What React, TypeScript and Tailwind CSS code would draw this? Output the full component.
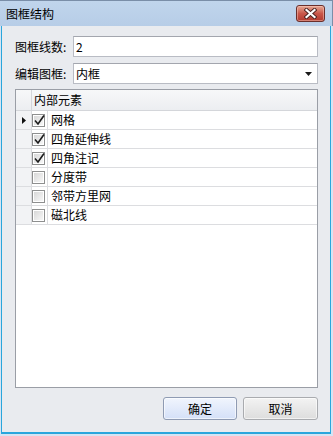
import { ChevronDown } from "lucide-react";

const FONT = { fontFamily: '"Noto Sans CJK SC", "Noto Sans", sans-serif' };

const rows = [
  { name: "网格", checked: true, current: true },
  { name: "四角延伸线", checked: true },
  { name: "四角注记", checked: true },
  { name: "分度带", checked: false },
  { name: "邻带方里网", checked: false },
  { name: "磁北线", checked: false },
];

function CheckBox({ checked }: { checked: boolean }) {
  return (
    <div className="w-[13px] h-[13px] border border-[#8e8f8f] bg-white p-[1px]">
      <div className="relative w-full h-full bg-gradient-to-br from-[#d8d8d8] to-[#f7f7f7]">
        {checked && (
          <svg className="absolute -left-[1px] -top-[2px]" width="13" height="13" viewBox="0 0 13 13">
            <path d="M2 6.5 L5 10 L11 1.5" fill="none" stroke="#1c1c1c" strokeWidth="1.6" />
          </svg>
        )}
      </div>
    </div>
  );
}

function CloseButton() {
  return (
    <div className="w-[29px] h-[17px] rounded-[3px] border border-[#6b2f2b] bg-gradient-to-b from-[#e4a794] via-[#c9574a] to-[#b23a2f] flex items-center justify-center shadow-[inset_0_0_0_1px_rgba(255,210,200,0.45)]">
      <svg width="13" height="11" viewBox="0 0 13 11">
        <path d="M2.5 2 L10.5 9 M10.5 2 L2.5 9" stroke="#4a2220" strokeWidth="4" strokeLinecap="square" />
        <path d="M2.5 2 L10.5 9 M10.5 2 L2.5 9" stroke="#ffffff" strokeWidth="2.2" strokeLinecap="square" />
      </svg>
    </div>
  );
}

export default function App() {
  return (
    <div className="w-[333px] h-[436px] flex flex-col bg-[#d6e4f3] text-[12px] text-black overflow-hidden" style={FONT}>
      {/* title bar */}
      <div className="h-[26px] shrink-0 flex items-center justify-between pl-[6px] pr-[7px] bg-gradient-to-b from-[#c0d5ec] to-[#b7cde7] border-t border-r border-[#7a8ea8]">
        <span className="leading-none text-[12px] text-black">图框结构</span>
        <CloseButton />
      </div>

      {/* body */}
      <div className="flex-1 flex flex-col ml-[1px] mr-[2px] mb-[2px] border-l border-r border-b-2 border-[#2aa6dc] bg-[#e9ebef] pl-[13px] pr-[12px] pt-[10px] pb-[11px]">
        <div className="flex items-center h-[21px]">
          <span className="w-[58px] leading-none">图框线数:</span>
          <div className="flex-1 h-full border border-[#b9bcc4] border-t-[#a3a6ae] bg-white flex items-center pl-[2px]">
            <span className="leading-none">2</span>
          </div>
        </div>

        <div className="flex items-center h-[21px] mt-[6px]">
          <span className="w-[58px] leading-none">编辑图框:</span>
          <div className="flex-1 h-full border border-[#b9bcc4] border-t-[#a3a6ae] bg-white flex items-center justify-between pl-[2px] pr-[5px]">
            <span className="leading-none">内框</span>
            <svg width="7" height="4" viewBox="0 0 7 4">
              <path d="M0 0 H7 L3.5 4 Z" fill="#1a1a1a" />
            </svg>
          </div>
        </div>

        {/* grid */}
        <div className="mt-[5px] h-[299px] border border-[#9a9ea6] bg-white flex flex-col">
          <div className="h-[21px] flex border-b border-[#d4d6da] bg-gradient-to-b from-[#f7f8f9] to-[#eceef1]">
            <div className="w-[16px] border-r border-[#d4d6da]" />
            <div className="flex-1 flex items-center pl-[2px] leading-none">内部元素</div>
          </div>
          {rows.map((r) => (
            <div key={r.name} className="h-[19px] flex border-b border-[#dcdde0]">
              <div className="w-[16px] border-r border-[#dcdde0] bg-[#f2f3f5] flex items-center justify-center">
                {r.current && (
                  <svg width="4" height="7" viewBox="0 0 4 7">
                    <path d="M0 0 L4 3.5 L0 7 Z" fill="#111" />
                  </svg>
                )}
              </div>
              <div className="w-[16px] border-r border-[#dcdde0] flex items-center pl-[0px]">
                <CheckBox checked={r.checked} />
              </div>
              <div className="flex-1 flex items-center pl-[3px] leading-none">{r.name}</div>
            </div>
          ))}
        </div>

        {/* buttons */}
        <div className="mt-[9px] flex justify-end gap-[6px]">
          <button className="w-[74px] h-[23px] rounded-[3px] border border-[#8f9bb3] bg-gradient-to-b from-[#f1f5fd] to-[#d4e0f8] leading-none shadow-[inset_0_0_0_1px_rgba(255,255,255,0.6)]">
            确定
          </button>
          <button className="w-[75px] h-[23px] rounded-[3px] border border-[#a9abaf] bg-gradient-to-b from-[#f3f3f3] to-[#dddddd] leading-none shadow-[inset_0_0_0_1px_rgba(255,255,255,0.6)]">
            取消
          </button>
        </div>
      </div>
    </div>
  );
}
